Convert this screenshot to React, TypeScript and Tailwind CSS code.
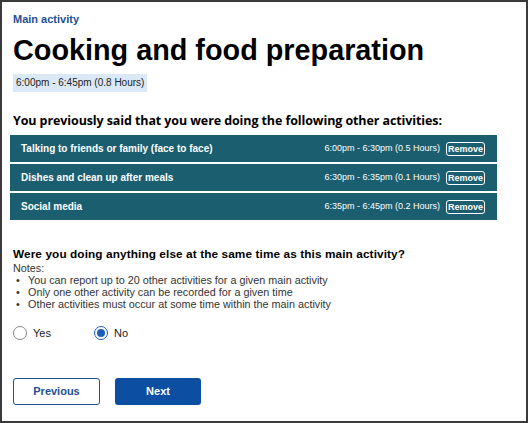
const activities = [
  { name: "Talking to friends or family (face to face)", time: "6:00pm - 6:30pm (0.5 Hours)" },
  { name: "Dishes and clean up after meals", time: "6:30pm - 6:35pm (0.1 Hours)" },
  { name: "Social media", time: "6:35pm - 6:45pm (0.2 Hours)" },
];

const notes = [
  "You can report up to 20 other activities for a given main activity",
  "Only one other activity can be recorded for a given time",
  "Other activities must occur at some time within the main activity",
];

export default function App() {
  return (
    <div className="w-[528px] h-[423px] border-2 border-[#3a3a3a] bg-white font-['Liberation_Sans',Arial,sans-serif] text-black overflow-hidden">
      <div className="pl-[11px] pr-[29px] pt-[10px]">
        <div className="text-[11px] font-bold text-[#1d4f91] leading-[14px]">Main activity</div>
        <h1 className="mt-[9px] text-[28.8px] font-bold leading-[30px]">
          Cooking and food preparation
        </h1>
        <div className="mt-[9px] inline-block bg-[#dbe9f7] px-[3px] text-[10px] leading-[18px] text-[#222]">
          6:00pm - 6:45pm (0.8 Hours)
        </div>

        <h2 className="mt-[20px] text-[12.5px] font-bold leading-[16px] font-['Open_Sans',sans-serif] tracking-[-0.1px]">
          You previously said that you were doing the following other activities:
        </h2>
        <div className="mt-[6px] flex flex-col gap-[2px] ml-[-3px]">
          {activities.map((a) => (
            <div
              key={a.name}
              className="h-[27px] bg-[#1b5e6f] flex items-center justify-between pl-[11px] pr-[12px] text-white"
            >
              <span className="text-[10px] font-bold">{a.name}</span>
              <div className="flex items-center gap-[6px]">
                <span className="text-[9px]">{a.time}</span>
                <button className="h-[14px] w-[39px] border border-white rounded-[3px] text-[9px] font-bold leading-[12px]">
                  Remove
                </button>
              </div>
            </div>
          ))}
        </div>

        <h2 className="mt-[27px] text-[11.8px] font-bold leading-[15px] tracking-[0.1px]">
          Were you doing anything else at the same time as this main activity?
        </h2>
        <div className="text-[10.8px] leading-[12px] text-[#333]">Notes:</div>
        <ul className="text-[10.8px] leading-[12px] text-[#333]">
          {notes.map((n) => (
            <li key={n} className="flex">
              <span className="w-[15px] pl-[3px]">•</span>
              <span>{n}</span>
            </li>
          ))}
        </ul>

        <div className="mt-[15px] flex items-center text-[11px] text-[#222]">
          <label className="flex items-center gap-[6px] w-[81px]">
            <span className="w-[14px] h-[14px] rounded-full border border-[#888] bg-white" />
            Yes
          </label>
          <label className="flex items-center gap-[6px]">
            <span className="w-[14px] h-[14px] rounded-full border border-[#1d5fb4] bg-white flex items-center justify-center">
              <span className="w-[8px] h-[8px] rounded-full bg-[#1d5fb4]" />
            </span>
            No
          </label>
        </div>

        <div className="mt-[36px] flex gap-[15px]">
          <button className="w-[87px] h-[27px] border border-[#1d4f91] rounded-[3px] text-[11px] font-bold text-[#1d4f91] bg-white">
            Previous
          </button>
          <button className="w-[86px] h-[27px] rounded-[3px] text-[11px] font-bold text-white bg-[#0b4ea2]">
            Next
          </button>
        </div>
      </div>
    </div>
  );
}
